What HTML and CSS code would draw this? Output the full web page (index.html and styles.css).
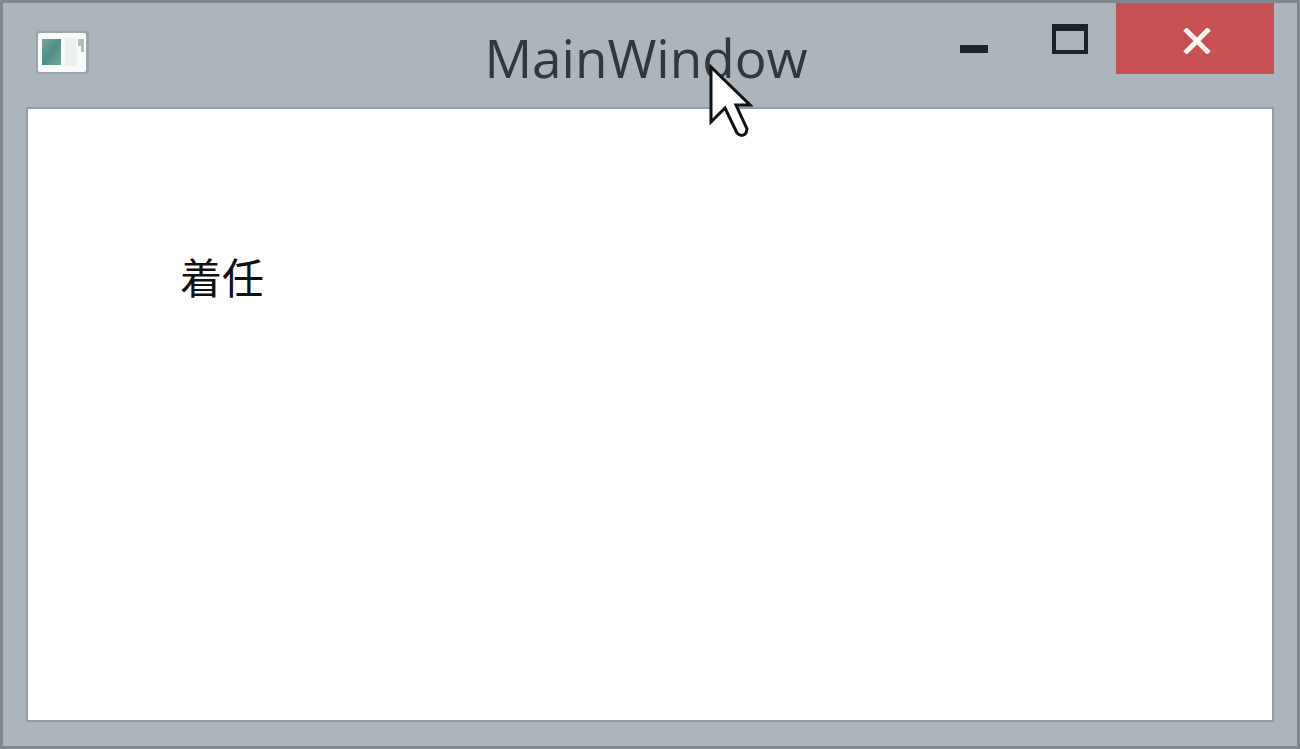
FILE: index.html
```html
<!DOCTYPE html>
<html lang="ja">
<head>
    <meta charset="utf-8">
    <title>MainWindow</title>
    <link rel="stylesheet" href="styles.css">
</head>
<body>
    <div class="window">
        <header class="titlebar">
            <svg class="app-icon" viewBox="0 0 56 46" aria-hidden="true">
                <defs>
                    <linearGradient id="pane" x1="0" y1="0" x2="1" y2="1">
                        <stop offset="0" stop-color="#7fa3a3"/>
                        <stop offset="0.5" stop-color="#4d9087"/>
                        <stop offset="1" stop-color="#72aa9c"/>
                    </linearGradient>
                </defs>
                <rect x="2" y="2" width="53" height="43" rx="3" fill="#9ba4a8"/>
                <rect x="4" y="4" width="48" height="39" rx="2" fill="#f7fbfa"/>
                <rect x="8" y="10" width="19" height="26" fill="url(#pane)"/>
                <rect x="31" y="9" width="12" height="28" fill="#ebf0ed"/>
                <path d="M44 10h6v13h-3v-6h-3z" fill="#b0bcbe"/>
            </svg>
            <h1 class="title">MainWindow</h1>
            <div class="controls">
                <button class="control" type="button" aria-label="Minimize">
                    <svg class="minimize-icon" viewBox="0 0 28 8"><path d="M0 0h28v8H0z" fill="#1d2429"/></svg>
                </button>
                <button class="control" type="button" aria-label="Maximize">
                    <svg class="maximize-icon" viewBox="0 0 36 30"><path d="M0 0h36v30H0zM4 7v19h28V7z" fill="#1d2429" fill-rule="evenodd"/></svg>
                </button>
                <button class="control close" type="button" aria-label="Close">
                    <svg class="close-icon" viewBox="0 0 30 26"><path d="M3 1L27 25M27 1L3 25" stroke="#fff5f2" stroke-width="5"/></svg>
                </button>
            </div>
        </header>
        <main class="client">
            <p class="label">着任</p>
        </main>
        <svg class="cursor" viewBox="0 0 44 74" aria-hidden="true">
            <path d="M2 3V58L16 44L28 69Q33 74 37 69L38 65L27 41H41Z" fill="#fff" stroke="#111" stroke-width="3"/>
        </svg>
    </div>
</body>
</html>
```
FILE: styles.css
```css
* {
    box-sizing: border-box;
}

body {
    margin: 0;
    font-family: "Open Sans", "Noto Sans CJK JP", sans-serif;
}

.window {
    position: relative;
    display: flex;
    flex-direction: column;
    min-height: 100vh;
    padding: 0 23px 24px;
    background-color: #abb5bb;
    border: 3px solid #7e898f;
}

.titlebar {
    display: grid;
    grid-template-columns: 1fr auto 1fr;
    height: 104px;
}

.app-icon {
    width: 56px;
    height: 46px;
    margin: 26px 8px 0;
}

.title {
    margin: 19px 0 0;
    padding-right: 8px;
    font-size: 53px;
    font-weight: 400;
    line-height: 72px;
    color: #30383e;
}

.controls {
    display: flex;
    justify-content: flex-end;
    height: 71px;
}

.control {
    display: flex;
    align-items: center;
    justify-content: center;
    width: 96px;
    padding: 0 0 0 4px;
    background: none;
    border: 0;
}

.close {
    width: 158px;
    background-color: #c75052;
}

.minimize-icon {
    width: 28px;
    height: 8px;
    margin-top: 20px;
}

.maximize-icon {
    width: 36px;
    height: 30px;
}

.close-icon {
    width: 30px;
    height: 26px;
    margin-top: 4px;
}

.client {
    flex: 1;
    padding: 144px 152px;
    background-color: #fff;
    border: 2px solid #929ca2;
}

.label {
    margin: 0;
    font-family: "Noto Sans CJK JP", sans-serif;
    font-size: 42px;
    line-height: 46px;
    color: #111;
}

/* mouse pointer, over the title */
.cursor {
    position: absolute;
    top: 61px;
    left: 706px;
    width: 44px;
    height: 74px;
}
```
